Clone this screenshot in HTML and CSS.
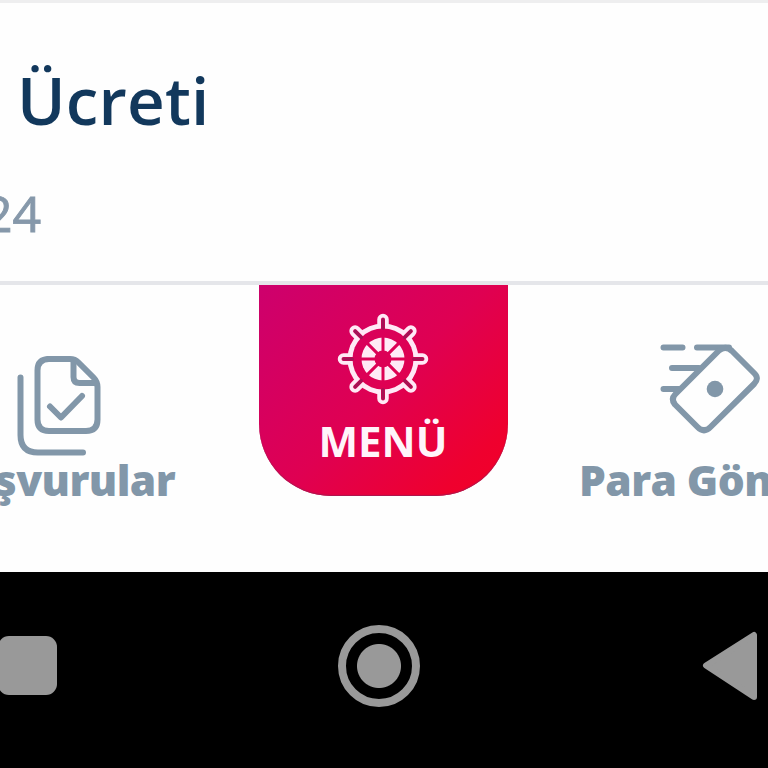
FILE: index.html
```
<!DOCTYPE html>
<html lang="tr">
<head>
<meta charset="utf-8">
<title>Menü</title>
<link rel="stylesheet" href="styles.css">
</head>
<body>
<main class="card">
  <h1 class="title">Ücreti</h1>
  <p class="date">24</p>
</main>
<nav class="tabs">
  <a class="tab tab-left">
    <svg class="icon icon-docs" width="90" height="108" viewBox="14 350 90 108">
      <path d="M20.5 377.500V435Q20.500 452.500 38 452.500H83"/>
      <path d="M47 359H70Q75 359 78.500 362.500L93.500 377.500Q97.500 381.500 97.500 387V419.500Q97.500 431 86 431H49Q37.500 431 37.500 419.500V370.500Q37.500 359 49 359"/>
      <path d="M73.500 361V377Q73.500 383 79.500 383H96"/>
      <path d="M50 406.500L61 417.500L82 396"/>
    </svg>
    <span class="label">Başvurular</span>
  </a>
  <a class="menu">
    <svg class="wheel" width="92" height="92" viewBox="-46 -46 92 92">
      <defs>
        <path id="handles" d="M0-39.500V39.500M-39.500 0H39.500M-27.900-27.900L27.900 27.900M27.900-27.900L-27.900 27.900"/>
        <mask id="rim" maskUnits="userSpaceOnUse" x="-46" y="-46" width="92" height="92">
          <circle r="35.500" fill="#fff"/>
          <use href="#handles" stroke="#fff" stroke-width="11.500" stroke-linecap="round"/>
          <circle r="30.500" fill="#000"/>
          <use href="#handles" stroke="#000" stroke-width="4" stroke-linecap="round"/>
        </mask>
        <mask id="hub" maskUnits="userSpaceOnUse" x="-46" y="-46" width="92" height="92">
          <circle r="21.500" fill="#fff"/>
          <circle r="8.500" fill="#000"/>
          <use href="#handles" stroke="#000" stroke-width="3"/>
        </mask>
      </defs>
      <use href="#handles" stroke="#8c1c55" stroke-width="3" stroke-linecap="round" stroke-dasharray="9 61 9" opacity=".7"/>
      <rect x="-46" y="-46" width="92" height="92" fill="#ffe9f6" mask="url(#rim)"/>
      <rect x="-46" y="-46" width="92" height="92" fill="#ffe9f6" mask="url(#hub)"/>
    </svg>
    <span class="menu-label">MENÜ</span>
  </a>
  <a class="tab tab-right">
    <svg class="icon icon-send" width="108" height="98" viewBox="656 340 108 98">
      <path d="M663.500 347.500H682.500M697 347.500H729M672 368H699M663.500 389H679"/>
      <path d="M719 350.500L675.500 394Q670.500 399 675 404.500L697.500 427Q704 433.500 710.500 427L754 384Q759.500 378.500 754.500 373.500L732 351Q725.500 345 719 350.500Z"/>
      <circle cx="715" cy="389" r="8.300" class="dot"/>
    </svg>
    <span class="label">Para Gönder</span>
  </a>
</nav>
<footer class="system">
  <span class="recent"></span>
  <span class="home"></span>
  <svg class="back" width="58" height="72" viewBox="0 0 58 72"><path d="M5 35.500L53 5V67Z"/></svg>
</footer>
</body>
</html>
```
FILE: styles.css
```
* { box-sizing: border-box; }
body {
  margin: 0;
  width: 768px;
  height: 768px;
  overflow: hidden;
  background: #fefefe;
  font-family: "Open Sans", "Noto Sans", sans-serif;
}
.card {
  height: 285px;
  border-top: 3px solid #eeeeef;
  border-bottom: 4px solid #e5e6ea;
  padding-top: 57px;
}
.title {
  margin: 0 0 43px 17px;
  font-size: 65.5px;
  line-height: 80px;
  font-weight: 600;
  letter-spacing: .2px;
  color: #12385c;
}
.date {
  margin: 0 0 0 -16px;
  font-size: 50px;
  line-height: 60px;
  color: #8698aa;
  -webkit-text-stroke: .9px #8698aa;
}
.tabs {
  height: 287px;
  display: grid;
  grid-template-columns: 259px 249px 260px;
}
.tab {
  display: flex;
  flex-direction: column;
  min-width: 0;
  overflow: hidden;
}
.icon {
  flex: none;
  fill: none;
  stroke: #8297a9;
  stroke-width: 6;
  stroke-linecap: round;
  stroke-linejoin: round;
}
.dot { fill: #8297a9; stroke: none; }
.icon-docs { margin: 65px 0 0 14px; }
.icon-send { margin: 55px 0 0 148px; }
.label {
  font-size: 42.5px;
  line-height: 50px;
  font-weight: 800;
  letter-spacing: -.6px;
  white-space: nowrap;
  color: #8297a9;
}
.tab-left .label { align-self: flex-end; margin: -3px 84px 0 0; }
.tab-right .label { margin: 17px 0 0 71px; }
.menu {
  height: 211px;
  display: flex;
  flex-direction: column;
  align-items: center;
  padding: 28px 1px 0 0;
  border-radius: 0 0 72px 72px;
  background: linear-gradient(135deg, #cd006d 0%, #df0052 50%, #ef002e 85%, #f20028 100%);
  box-shadow: inset 0 -1px 1px #a8184f;
}
.wheel { flex: none; fill: none; }
.menu-label {
  margin-top: 11px;
  font-size: 42px;
  line-height: 50px;
  font-weight: 700;
  color: #fff4fa;
}
.system {
  height: 196px;
  background: #000;
  display: flex;
  align-items: center;
  padding-bottom: 9px;
}
.recent {
  width: 59px;
  height: 59px;
  margin-left: -2px;
  border-radius: 11px;
  background: #999;
}
.home {
  width: 82px;
  height: 82px;
  margin-left: 281px;
  border: 8px solid #999;
  border-radius: 50%;
  background: radial-gradient(circle, #999 21.500px, #000 22.500px);
}
.back {
  margin-left: 281px;
  fill: #999;
  stroke: #999;
  stroke-width: 6;
  stroke-linejoin: round;
}
```
